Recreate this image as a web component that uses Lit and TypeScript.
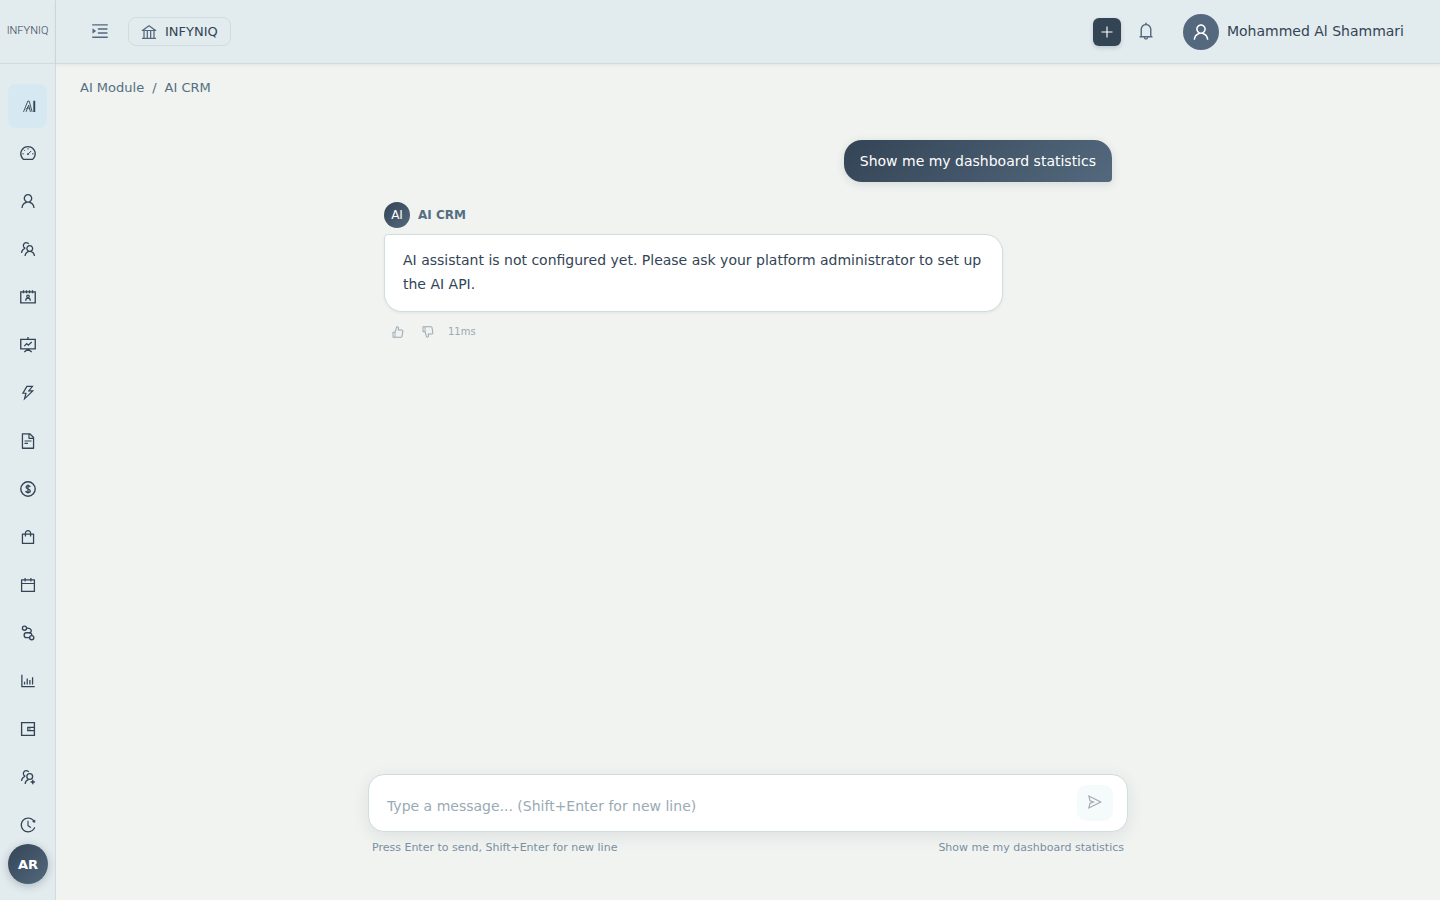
import { LitElement, html, css, svg, type TemplateResult } from "lit";
import { customElement, property, state } from "lit/decorators.js";
import { classMap } from "lit/directives/class-map.js";

const TEAM_FRONT =
  "M824.2 699.9a301.55 301.55 0 00-86.4-60.4C783.1 602.8 812 546.8 812 484c0-110.8-92.4-201.7-203.2-200-109.1 1.7-197 90.6-197 200 0 62.8 29 118.8 74.2 155.5a300.95 300.95 0 00-86.4 60.4C345 754.6 314 826.8 312 903.8a8 8 0 008 8.2h56c4.3 0 7.9-3.4 8-7.7 1.9-58 25.4-112.3 66.7-153.5A226.62 226.62 0 01612 684c60.9 0 118.2 23.7 161.3 66.8C814.6 792 838 846.3 840 904.3c.1 4.3 3.7 7.7 8 7.7h56a8 8 0 008-8.2c-2-77-33-149.2-87.8-203.9zM612 612c-34.2 0-66.4-13.3-90.5-37.5a126.86 126.86 0 01-37.5-91.8c.3-32.8 13.4-64.5 36.3-88 24-24.6 56.1-38.3 90.4-38.7 33.9-.3 66.8 12.9 91 36.6 24.8 24.3 38.4 56.8 38.4 91.4 0 34.2-13.3 66.3-37.5 90.5A127.3 127.3 0 01612 612z";
const TEAM_BACK =
  "M361.5 510.4c-.9-8.7-1.4-17.5-1.4-26.4 0-15.9 1.5-31.4 4.3-46.5.7-3.6-1.2-7.3-4.5-8.8-13.6-6.1-26.1-14.5-36.9-25.1a127.54 127.54 0 01-38.7-95.4c.9-32.1 13.8-62.6 36.3-85.6 24.7-25.3 57.9-39.1 93.2-38.7 31.9.3 62.7 12.6 86 34.4 7.9 7.4 14.7 15.6 20.4 24.4 2 3.1 5.9 4.4 9.3 3.2 17.6-6.1 36.2-10.4 55.3-12.4 5.6-.6 8.8-6.6 6.3-11.6-32.5-64.3-98.9-108.7-175.7-109.9-110.9-1.7-203.3 89.2-203.3 199.9 0 62.8 28.9 118.8 74.2 155.5-31.8 14.7-61.1 35-86.5 60.4-54.8 54.7-85.8 126.9-87.8 204a8 8 0 008 8.2h56.1c4.3 0 7.9-3.4 8-7.7 1.9-58 25.4-112.3 66.7-153.5 29.4-29.4 65.4-49.8 104.7-59.7 3.9-1 6.5-4.7 6-8.7z";
const THUMB =
  "M885.9 533.7c16.8-22.2 26.1-49.4 26.1-77.7 0-44.9-25.1-87.4-65.5-111.1a67.67 67.67 0 00-34.3-9.3H572.4l6-122.9c1.4-29.7-9.1-57.9-29.5-79.4A106.62 106.62 0 00471 99.9c-52 0-98 35-111.8 85.1l-85.9 311H144c-17.7 0-32 14.3-32 32v364c0 17.7 14.3 32 32 32h601.3c9.2 0 18.2-1.8 26.5-5.4 47.6-20.3 78.3-66.8 78.3-118.4 0-12.6-1.8-25-5.4-37 16.8-22.2 26.1-49.4 26.1-77.7 0-12.6-1.8-25-5.4-37 16.8-22.2 26.1-49.4 26.1-77.7-.2-12.6-2-25.1-5.6-37.1zM184 852V568h81v284h-81zm636.4-353l-21.9 19 13.9 25.4a56.2 56.2 0 016.9 27.3c0 16.5-7.2 32.2-19.6 43l-21.9 19 13.9 25.4a56.2 56.2 0 016.9 27.3c0 16.5-7.2 32.2-19.6 43l-21.9 19 13.9 25.4a56.2 56.2 0 016.9 27.3c0 22.4-13.2 42.6-33.6 51.8H329V564.8l99.5-360.5a44.1 44.1 0 0142.2-32.3c7.6 0 15.1 2.2 21.1 6.7 9.9 7.4 15.2 18.6 14.6 30.5l-9.6 198.4h314.4C829 418.5 840 436.9 840 456c0 16.5-7.2 32.1-19.6 43z";

const ICONS: Record<string, TemplateResult> = {
  ai: svg`<g fill="none" stroke="currentColor"><path stroke-width="50" d="M256 904L500 290L580 290L748 904M400 904L550 520L650 904M390 760L500 640L610 760"/><path stroke-width="110" d="M868 270V910"/></g>`,
  dashboard: svg`<path d="M924.8 385.6a446.7 446.7 0 00-96-142.4 446.7 446.7 0 00-142.4-96C631.1 123.8 572.5 112 512 112s-119.1 11.8-174.4 35.2a446.7 446.7 0 00-142.4 96 446.7 446.7 0 00-96 142.4C75.8 440.9 64 499.5 64 560c0 132.7 58.3 257.7 159.9 343.1l1.7 1.4c5.8 4.8 13.1 7.5 20.6 7.5h531.7c7.5 0 14.8-2.7 20.6-7.5l1.7-1.4C901.7 817.7 960 692.7 960 560c0-60.5-11.9-119.1-35.2-174.4zM761.4 836H262.6A371.12 371.12 0 01140 560c0-99.4 38.7-192.8 109-263 70.3-70.3 163.7-109 263-109 99.4 0 192.8 38.7 263 109 70.3 70.3 109 163.7 109 263 0 105.6-44.5 205.5-122.6 276z"/><circle cx="508" cy="580" r="52"/><path fill="none" stroke="currentColor" stroke-width="56" d="M512 232V312M192 560H272M744 560H832M284 332L340 388M520 570L696 394"/>`,
  user: svg`<path d="M858.5 763.6a374 374 0 00-80.6-119.5 375.63 375.63 0 00-119.5-80.6c-.4-.2-.8-.3-1.2-.5C719.5 518 760 444.7 760 362c0-137-111-248-248-248S264 225 264 362c0 82.7 40.5 156 102.8 201.1-.4.2-.8.3-1.2.5-44.8 18.9-85 46-119.5 80.6a375.63 375.63 0 00-80.6 119.5A371.7 371.7 0 00136 901.8a8 8 0 008 8.2h60c4.4 0 7.9-3.5 8-7.8 2-77.2 33-149.5 87.8-204.3 56.7-56.7 132-87.9 212.2-87.9s155.5 31.2 212.2 87.9C779 752.7 810 825 812 902.2c.1 4.4 3.6 7.8 8 7.8h60a8 8 0 008-8.2c-1-47.8-10.9-94.3-29.5-138.2zM512 534c-45.9 0-89.1-17.9-121.6-50.4S340 407.9 340 362c0-45.9 17.9-89.1 50.4-121.6S466.1 190 512 190s89.1 17.9 121.6 50.4S684 316.1 684 362c0 45.9-17.9 89.1-50.4 121.6S557.9 534 512 534z"/>`,
  team: svg`<path d=${TEAM_FRONT}/><path d=${TEAM_BACK}/>`,
  contacts: svg`<g fill="none" stroke="currentColor"><path stroke-width="76" d="M100 220H924V844H100ZM256 132V304M426 132V304M598 132V304M768 132V304"/><circle cx="512" cy="476" r="74" stroke-width="68"/><path stroke-width="72" d="M380 720C385 530 639 530 644 720"/></g>`,
  projection: svg`<g fill="none" stroke="currentColor" stroke-width="76"><path d="M512 60V160M100 196H924V732H100ZM512 750L300 914M512 750L724 914"/><path stroke-width="72" d="M300 574L440 430L530 520L724 338"/></g>`,
  thunder: svg`<path d="M848 359.3H627.7L825.8 109c4.1-5.3.4-13-6.3-13H436c-2.8 0-5.5 1.5-6.9 4L170 547.5c-3.1 5.3.7 12 6.9 12h174.4l-89.4 357.6c-1.9 7.8 7.5 13.3 13.3 7.7L853.5 373c5.2-4.9 1.7-13.7-5.5-13.7zM378.2 732.5l60.3-241H281.1l189.6-327.4h224.6L487 427.4h211L378.2 732.5z"/>`,
  file: svg`<path d="M854.6 288.6L639.4 73.4c-6-6-14.1-9.4-22.6-9.4H192c-17.7 0-32 14.3-32 32v832c0 17.7 14.3 32 32 32h640c17.7 0 32-14.3 32-32V311.3c0-8.5-3.4-16.7-9.4-22.7zM790.2 326H602V137.8L790.2 326zm1.8 562H232V136h302v216a42 42 0 0042 42h216v494zM504 618H320c-4.4 0-8 3.6-8 8v48c0 4.4 3.6 8 8 8h184c4.4 0 8-3.6 8-8v-48c0-4.4-3.6-8-8-8zM312 490v48c0 4.4 3.6 8 8 8h384c4.4 0 8-3.6 8-8v-48c0-4.4-3.6-8-8-8H320c-4.4 0-8 3.6-8 8z"/>`,
  dollar: svg`<g fill="none" stroke="currentColor"><circle cx="512" cy="512" r="410" stroke-width="80"/><path stroke-width="76" d="M636 408C620 296 404 296 404 408C404 500 640 500 640 622C640 736 394 746 384 620M512 250V774"/></g>`,
  shopping: svg`<path d="M832 312H696v-16c0-101.6-82.4-184-184-184s-184 82.4-184 184v16H192c-17.7 0-32 14.3-32 32v536c0 17.7 14.3 32 32 32h640c17.7 0 32-14.3 32-32V344c0-17.7-14.3-32-32-32zm-432-16c0-61.9 50.1-112 112-112s112 50.1 112 112v16H400v-16zm392 544H232V384h96v88c0 4.4 3.6 8 8 8h56c4.4 0 8-3.6 8-8v-88h224v88c0 4.4 3.6 8 8 8h56c4.4 0 8-3.6 8-8v-88h96v456z"/>`,
  calendar: svg`<path d="M880 184H712v-64c0-4.4-3.6-8-8-8h-56c-4.4 0-8 3.6-8 8v64H384v-64c0-4.4-3.6-8-8-8h-56c-4.4 0-8 3.6-8 8v64H144c-17.7 0-32 14.3-32 32v664c0 17.7 14.3 32 32 32h736c17.7 0 32-14.3 32-32V216c0-17.7-14.3-32-32-32zm-40 656H184V460h656v380zM184 392V256h128v48c0 4.4 3.6 8 8 8h56c4.4 0 8-3.6 8-8v-48h256v48c0 4.4 3.6 8 8 8h56c4.4 0 8-3.6 8-8v-48h128v136H184z"/>`,
  flow: svg`<g fill="none" stroke="currentColor" stroke-width="76"><circle cx="312" cy="236" r="118"/><circle cx="724" cy="776" r="118"/><path d="M430 236C600 220 690 290 696 380C702 470 640 500 560 500H420C250 500 250 776 420 776H606"/><path d="M560 500C690 490 730 560 730 658"/></g>`,
  chart: svg`<path d="M888 792H200V168c0-4.4-3.6-8-8-8h-56c-4.4 0-8 3.6-8 8v688c0 4.4 3.6 8 8 8h752c4.4 0 8-3.6 8-8v-56c0-4.4-3.6-8-8-8zm-600-80h56c4.4 0 8-3.6 8-8V560c0-4.4-3.6-8-8-8h-56c-4.4 0-8 3.6-8 8v144c0 4.4 3.6 8 8 8zm152 0h56c4.4 0 8-3.6 8-8V384c0-4.4-3.6-8-8-8h-56c-4.4 0-8 3.6-8 8v320c0 4.4 3.6 8 8 8zm152 0h56c4.4 0 8-3.6 8-8V462c0-4.4-3.6-8-8-8h-56c-4.4 0-8 3.6-8 8v242c0 4.4 3.6 8 8 8zm152 0h56c4.4 0 8-3.6 8-8V304c0-4.4-3.6-8-8-8h-56c-4.4 0-8 3.6-8 8v400c0 4.4 3.6 8 8 8z"/>`,
  wallet: svg`<path fill="none" stroke="currentColor" stroke-width="76" d="M148 148H876V876H148ZM876 418H500V606H876"/><circle cx="620" cy="512" r="40"/>`,
  teamAdd: svg`<path d=${TEAM_BACK}/><circle cx="610" cy="484" r="164" fill="none" stroke="currentColor" stroke-width="76"/><path fill="none" stroke="currentColor" stroke-width="76" d="M348 904C354 790 430 690 540 656M660 796H904M782 674V918"/>`,
  history: svg`<path d="M536.1 273H488c-4.4 0-8 3.6-8 8v275.3c0 2.6 1.2 5 3.3 6.5l165.3 120.7c3.6 2.6 8.6 1.9 11.2-1.7l28.6-39c2.7-3.7 1.9-8.7-1.7-11.2L544.1 528.5V281c0-4.4-3.6-8-8-8zm219.8 75.2l156.8 38.3c5 1.2 9.9-2.6 9.9-7.7l.8-161.5c0-6.7-7.7-10.5-12.9-6.3L752.9 334.1a8 8 0 003 14.1zm167.7 301.1l-56.7-19.5a8 8 0 00-10.1 4.8c-1.9 5.1-3.9 10.1-6 15.1-17.8 42.1-43.3 80-75.9 112.5a353 353 0 01-112.5 75.9 352.18 352.18 0 01-137.7 27.8c-47.8 0-94.1-9.3-137.7-27.8a353 353 0 01-112.5-75.9c-32.5-32.5-58-70.4-75.9-112.5A353.44 353.44 0 01171 512c0-47.8 9.3-94.2 27.8-137.8 17.8-42.1 43.3-80 75.9-112.5a353 353 0 01112.5-75.9C430.6 167.3 477 158 524.8 158s94.1 9.3 137.7 27.8A353 353 0 01775 261.7c10.2 10.3 19.8 21 28.6 32.3l59.8-46.8C784.7 146.6 662.2 81.9 524.6 82 285 82.1 92.6 276.7 95 516.4 97.4 751.9 288.9 942 524.8 942c185.5 0 343.5-117.6 403.7-282.3 1.5-4.2-.7-8.9-4.9-10.4z"/>`,
  menu: svg`<path d="M408 442h480c4.4 0 8-3.6 8-8v-56c0-4.4-3.6-8-8-8H408c-4.4 0-8 3.6-8 8v56c0 4.4 3.6 8 8 8zm-8 204c0 4.4 3.6 8 8 8h480c4.4 0 8-3.6 8-8v-56c0-4.4-3.6-8-8-8H408c-4.4 0-8 3.6-8 8v56zm504-486H120c-4.4 0-8 3.6-8 8v56c0 4.4 3.6 8 8 8h784c4.4 0 8-3.6 8-8v-56c0-4.4-3.6-8-8-8zm0 632H120c-4.4 0-8 3.6-8 8v56c0 4.4 3.6 8 8 8h784c4.4 0 8-3.6 8-8v-56c0-4.4-3.6-8-8-8zM142.4 642.1L298.7 519a8.84 8.84 0 000-13.9L142.4 381.9c-5.8-4.6-14.4-.5-14.4 6.9v246.3a8.9 8.9 0 0014.4 7z"/>`,
  bank: svg`<path d="M894 462c30.9 0 43.8-39.7 18.7-58L530.8 126.2a31.81 31.81 0 00-37.6 0L111.3 404c-25.1 18.2-12.2 58 18.8 58H192v374h-72c-4.4 0-8 3.6-8 8v52c0 4.4 3.6 8 8 8h784c4.4 0 8-3.6 8-8v-52c0-4.4-3.6-8-8-8h-72V462h62zM512 196.7l271.1 197.2H240.9L512 196.7zM264 462h117v374H264V462zm189 0h117v374H453V462zm307 374H642V462h118v374z"/>`,
  plus: svg`<path d="M476 160h72v704h-72zM160 476h704v72H160z"/>`,
  bell: svg`<path d="M816 768h-24V428c0-141.1-104.3-257.8-240-277.2V112c0-22.1-17.9-40-40-40s-40 17.9-40 40v38.8C336.3 170.2 232 286.9 232 428v340h-24c-17.7 0-32 14.3-32 32v32c0 4.4 3.6 8 8 8h216c0 61.8 50.2 112 112 112s112-50.2 112-112h216c4.4 0 8-3.6 8-8v-32c0-17.7-14.3-32-32-32zM512 888c-26.5 0-48-21.5-48-48h96c0 26.5-21.5 48-48 48zM304 768V428c0-55.6 21.6-107.8 60.9-147.1S456.4 220 512 220c55.6 0 107.8 21.6 147.1 60.9S720 372.4 720 428v340H304z"/>`,
  like: svg`<path d=${THUMB}/>`,
  dislike: svg`<path transform="matrix(1 0 0 -1 0 1024)" d=${THUMB}/>`,
  send: svg`<path d="M931.4 498.9L94.9 79.5c-3.4-1.7-7.3-2.1-11-1.2a15.99 15.99 0 00-11.7 19.3l86.2 352.2c1.3 5.3 5.2 9.6 10.4 11.3l147.7 50.7-147.6 50.7c-5.2 1.8-9.1 6-10.3 11.3L72.2 926.5c-.9 3.7-.5 7.6 1.2 10.9 3.9 7.9 13.5 11.1 21.5 7.2l836.5-417c3.1-1.5 5.6-4.1 7.2-7.1 3.9-8 .7-17.6-7.2-21.6zM170.8 826.3l50.3-205.6 295.2-101.3c2.3-.8 4.2-2.6 5-5 1.4-4.2-.8-8.7-5-10.2L221.1 403 171 198.2l628 314.9-628.2 313.2z"/>`,
};

@customElement("ui-icon")
class UiIcon extends LitElement {
  @property() name = "";

  static styles = css`
    :host { display: block; width: 16px; height: 16px; flex: none; }
    .glyph { display: block; width: 100%; height: 100%; fill: currentColor; }
  `;

  render() {
    return html`<svg class="glyph" viewBox="0 0 1024 1024" aria-hidden="true">${ICONS[this.name]}</svg>`;
  }
}

const NAV: { icon: string; label: string }[] = [
  { icon: "ai", label: "AI Module" },
  { icon: "dashboard", label: "Dashboard" },
  { icon: "user", label: "Customers" },
  { icon: "team", label: "Teams" },
  { icon: "contacts", label: "Contacts" },
  { icon: "projection", label: "Campaigns" },
  { icon: "thunder", label: "Leads" },
  { icon: "file", label: "Documents" },
  { icon: "dollar", label: "Sales" },
  { icon: "shopping", label: "Products" },
  { icon: "calendar", label: "Calendar" },
  { icon: "flow", label: "Workflows" },
  { icon: "chart", label: "Reports" },
  { icon: "wallet", label: "Wallet" },
  { icon: "teamAdd", label: "Recruitment" },
  { icon: "history", label: "History" },
];

@customElement("app-root")
class AppRoot extends LitElement {
  @state() private active = 0;

  static styles = css`
    :host {
      display: block;
      height: 100vh;
      font-family: "DejaVu Sans", sans-serif;
      font-size: 14px;
      color: #334455;
      --ink: #334455;
      --slate: #54697e;
      --line: #d0dce0;
      --bar: #e2ebee;
      --grad: linear-gradient(135deg, #334455, #54697e);
    }
    * { box-sizing: border-box; }
    button, textarea { font: inherit; color: inherit; margin: 0; padding: 0; border: 0; background: none; }
    button { cursor: pointer; display: flex; align-items: center; justify-content: center; }
    a { color: inherit; text-decoration: none; }

    .shell { position: relative; display: flex; height: 100%; background: #f0f3f0; overflow: hidden; }

    .sidebar { flex: none; width: 56px; display: flex; flex-direction: column; background: var(--bar); border-right: 1px solid var(--line); }
    .logo { flex: none; height: 64px; display: flex; align-items: center; justify-content: center; padding-bottom: 2px; border-bottom: 1px solid var(--line); font-family: Roboto, sans-serif; font-weight: 300; font-size: 11px; color: var(--ink); }
    .nav { flex: 1; min-height: 0; overflow: hidden; display: flex; flex-direction: column; gap: 4px; padding: 20px 8px; }
    .nav-item { flex: none; height: 44px; display: flex; align-items: center; justify-content: center; padding-bottom: 2px; border-radius: 8px; }
    .nav-item.active { background: #d6e9f2; }
    .nav-icon { width: 18px; height: 18px; }
    .assistant { position: absolute; left: 8px; bottom: 16px; width: 40px; height: 40px; border-radius: 50%; background: var(--grad); color: #fff; font-size: 13px; font-weight: 700; box-shadow: 0 2px 8px rgba(51, 68, 85, 0.3); }

    .page { flex: 1; min-width: 0; display: flex; flex-direction: column; }
    .header { flex: none; height: 64px; display: flex; align-items: center; padding: 0 36px 0 34px; background: var(--bar); border-bottom: 1px solid var(--line); box-shadow: 0 1px 3px rgba(51, 68, 85, 0.08); }
    .toggle { padding-bottom: 2px; color: var(--slate); }
    .toggle-icon { width: 20px; height: 20px; }
    .org { height: 29px; margin-left: 18px; padding: 0 12px 0 11px; gap: 7px; border: 1px solid var(--line); border-radius: 8px; font-size: 13px; }
    .org-icon { width: 18px; height: 18px; color: var(--slate); }
    .tools { margin-left: auto; display: flex; align-items: center; }
    .add { width: 28px; height: 28px; border-radius: 6px; background: var(--ink); color: #fff; box-shadow: 0 2px 4px rgba(51, 68, 85, 0.2); }
    .bell { margin-left: 15px; padding-bottom: 2px; color: var(--slate); }
    .bell-icon { width: 20px; height: 20px; }
    .account { margin-left: 27px; gap: 8px; }
    .account-name { padding-bottom: 2px; }
    .avatar { width: 36px; height: 36px; display: flex; align-items: center; justify-content: center; border-radius: 50%; background: var(--slate); color: #fff; }
    .avatar-icon { width: 20px; height: 20px; }

    .content { flex: 1; min-height: 0; display: flex; flex-direction: column; padding: 16px 24px 44px; }
    .crumbs { display: flex; gap: 8px; font-size: 13px; line-height: 16px; color: #546f82; }
    .chat { flex: 1; min-height: 0; width: 100%; max-width: 760px; margin: 0 auto; display: flex; flex-direction: column; }
    .messages { flex: 1; min-height: 0; padding: 44px 16px 0; display: flex; flex-direction: column; }
    .mine { align-self: flex-end; padding: 10px 16px; line-height: 22px; color: #fff; background: var(--grad); border-radius: 18px 18px 4px 18px; box-shadow: 0 2px 8px rgba(51, 68, 85, 0.14); }
    .sender { display: flex; align-items: center; gap: 8px; margin-top: 20px; font-size: 12px; font-weight: 700; color: #546f82; }
    .bot { width: 26px; height: 26px; display: flex; align-items: center; justify-content: center; border-radius: 50%; background: var(--grad); color: #fff; font-weight: 400; }
    .reply { width: 85%; margin-top: 6px; padding: 13px 18px 15px; line-height: 24px; background: #fff; border: 1px solid var(--line); border-radius: 4px 18px 18px 18px; box-shadow: 0 1px 3px rgba(51, 68, 85, 0.08); }
    .feedback { display: flex; align-items: center; gap: 6px; margin-top: 8px; padding-left: 2px; color: #9aa8b4; font-size: 10px; }
    .vote { width: 24px; height: 24px; }
    .vote-icon { width: 14px; height: 14px; }
    .elapsed { padding: 0 0 2px 2px; }

    .composer { display: flex; gap: 10px; padding: 10px 14px 10px 18px; background: #fff; border: 1px solid var(--line); border-radius: 16px; box-shadow: 0 4px 16px rgba(51, 68, 85, 0.1); }
    .entry { flex: 1; min-width: 0; height: 36px; padding-top: 10px; line-height: 22px; resize: none; outline: none; overflow: hidden; }
    .entry::placeholder { color: #9aaab4; opacity: 1; }
    .send { width: 36px; height: 36px; padding-bottom: 2px; border-radius: 10px; background: #f5fafa; color: #a0a8b2; }
    .hints { display: flex; justify-content: space-between; margin-top: 8px; padding: 0 4px; font-size: 11px; line-height: 16px; color: #7a8fa0; }
  `;

  render() {
    return html`
      <div class="shell">
        <aside class="sidebar">
          <div class="logo">INFYNIQ</div>
          <nav class="nav" aria-label="Modules">
            ${NAV.map(
              (item, i) => html`<a
                href="#"
                class=${classMap({ "nav-item": true, active: i === this.active })}
                aria-label=${item.label}
                @click=${(e: Event) => { e.preventDefault(); this.active = i; }}
              ><ui-icon class="nav-icon" name=${item.icon}></ui-icon></a>`,
            )}
          </nav>
        </aside>
        <div class="page">
          <header class="header">
            <button class="toggle" aria-label="Expand menu"><ui-icon class="toggle-icon" name="menu"></ui-icon></button>
            <button class="org"><ui-icon class="org-icon" name="bank"></ui-icon>INFYNIQ</button>
            <div class="tools">
              <button class="add" aria-label="Create"><ui-icon name="plus"></ui-icon></button>
              <button class="bell" aria-label="Notifications"><ui-icon class="bell-icon" name="bell"></ui-icon></button>
              <button class="account">
                <span class="avatar"><ui-icon class="avatar-icon" name="user"></ui-icon></span>
                <span class="account-name">Mohammed Al Shammari</span>
              </button>
            </div>
          </header>
          <main class="content">
            <nav class="crumbs" aria-label="Breadcrumb">
              <a href="#">AI Module</a><span>/</span><span>AI CRM</span>
            </nav>
            <section class="chat">
              <div class="messages">
                <div class="mine">Show me my dashboard statistics</div>
                <div class="sender"><span class="bot">AI</span>AI CRM</div>
                <div class="reply">AI assistant is not configured yet. Please ask your platform administrator to set up the AI API.</div>
                <div class="feedback">
                  <button class="vote" aria-label="Helpful"><ui-icon class="vote-icon" name="like"></ui-icon></button>
                  <button class="vote" aria-label="Not helpful"><ui-icon class="vote-icon" name="dislike"></ui-icon></button>
                  <span class="elapsed">11ms</span>
                </div>
              </div>
              <form class="composer" @submit=${(e: Event) => e.preventDefault()}>
                <textarea class="entry" rows="1" aria-label="Message" placeholder="Type a message... (Shift+Enter for new line)"></textarea>
                <button class="send" aria-label="Send"><ui-icon name="send"></ui-icon></button>
              </form>
              <div class="hints"><span>Press Enter to send, Shift+Enter for new line</span><span>Show me my dashboard statistics</span></div>
            </section>
          </main>
        </div>
        <button class="assistant">AR</button>
      </div>
    `;
  }
}
